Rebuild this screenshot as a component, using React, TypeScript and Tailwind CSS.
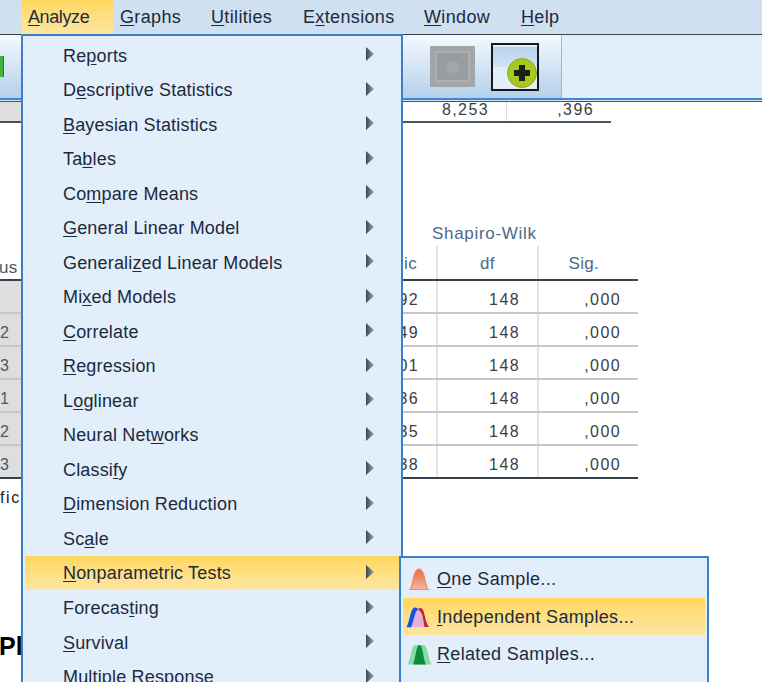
import React from 'react';

const font = "font-['Liberation_Sans',Arial,sans-serif]";

// text with the mnemonic letter underlined
const Label = ({ text, at }: { text: string; at: number }) => (
  <span>
    {text.slice(0, at)}
    <u className="underline-offset-2">{text[at]}</u>
    {text.slice(at + 1)}
  </span>
);

const topMenu: [string, number, string][] = [
  ['Graphs', 0, 'w-[91px]'],
  ['Utilities', 0, 'w-[92px]'],
  ['Extensions', 1, 'w-[121px]'],
  ['Window', 0, 'w-[97px]'],
  ['Help', 0, 'w-[60px]'],
];

const analyzeItems: [string, number][] = [
  ['Reports', 2],
  ['Descriptive Statistics', 1],
  ['Bayesian Statistics', 0],
  ['Tables', 2],
  ['Compare Means', 2],
  ['General Linear Model', 0],
  ['Generalized Linear Models', 8],
  ['Mixed Models', 2],
  ['Correlate', 0],
  ['Regression', 0],
  ['Loglinear', 1],
  ['Neural Networks', 10],
  ['Classify', 6],
  ['Dimension Reduction', 0],
  ['Scale', 2],
  ['Nonparametric Tests', 0],
  ['Forecasting', 7],
  ['Survival', 0],
  ['Multiple Response', 0],
];

const rows = [
  ['', '92'],
  ['2', '49'],
  ['3', '01'],
  ['1', '36'],
  ['2', '35'],
  ['3', '38'],
];

const OneSampleIcon = () => (
  <svg width="20" height="23" viewBox="0 0 20 23">
    <defs>
      <linearGradient id="one" x1="0" y1="0" x2="0" y2="1">
        <stop offset="0" stopColor="#e56a42" />
        <stop offset="1" stopColor="#f4b79f" />
      </linearGradient>
    </defs>
    <path d="M1 21.5 C4 19 4 1 10 1 C16 1 16 19 19 21.5 Z" fill="url(#one)" stroke="#ec8b68" strokeWidth="1.2" />
  </svg>
);

const IndependentIcon = () => (
  <svg width="24" height="23" viewBox="0 0 24 23">
    <path d="M5 21 C8 14 8 3 12 3 C16 3 16 14 20 21 Z" fill="#e4aee0" />
    <path d="M14 2 C19 1 18 14 23 21 L18.5 21 C17 13 17 6 12 3.5 Z" fill="#c0232f" />
    <path d="M0.5 21 C4 16 4 2 9 1.5 C10.5 1.5 11.5 2 12.5 3 C8.5 5 8 15 5 21.5 Z" fill="#1252e6" />
  </svg>
);

const RelatedIcon = () => (
  <svg width="25" height="21" viewBox="0 0 25 21">
    <path d="M0.5 20.5 C4 15 4 2 8 1 L17 1 C21 2 21 15 24.5 20.5 Z" fill="#86dca4" />
    <path d="M6 20.5 C9 14 9 1 12.5 1 C16 1 16 14 19 20.5 Z" fill="#0d8a3e" />
  </svg>
);

const Arrow = () => (
  <svg width="8" height="14" viewBox="0 0 8 14" className="absolute left-[341px] top-1/2 -mt-[8px]">
    <defs>
      <linearGradient id="arrow" x1="0" y1="0" x2="1" y2="0">
        <stop offset="0" stopColor="#3e4650" />
        <stop offset="1" stopColor="#9aa4ae" />
      </linearGradient>
    </defs>
    <path d="M0 0 L8 7 L0 14 Z" fill="url(#arrow)" />
  </svg>
);

const App: React.FC = () => {
  return (
    <div className={`relative w-[762px] h-[682px] overflow-hidden bg-white text-[18px] text-[#1c2a3c] ${font}`}>
      {/* menu bar */}
      <div className="flex h-[34px] bg-[#cfe0f1] pl-[21px] items-stretch">
        <div className="flex w-[92px] items-center pl-[7px] tracking-[-0.4px] bg-gradient-to-b from-[#ffd75e] to-[#fde6a0]">
          <Label text="Analyze" at={0} />
        </div>
        {topMenu.map(([t, at, w]) => (
          <div key={t} className={`flex items-center pl-[7px] tracking-[0.35px] ${w}`}>
            <Label text={t} at={at} />
          </div>
        ))}
      </div>

      {/* toolbar */}
      <div className="flex h-[64px] border-t border-[#3c4450]">
        <div className="w-[562px] flex items-center gap-[16px] pr-[22px] border-r border-[#a8b4c0] bg-gradient-to-b from-[#f4f9fe] to-[#b4d0ea]">
          <div className="w-[4px] h-[21px] mr-auto bg-[#3fb13c] border-r border-[#2c7a2a]" />
          <div className="w-[45px] h-[41px] bg-[#a3a6a8] p-[5px]">
            <div className="w-full h-full bg-[#9a9da0] border-2 border-[#adafb1] flex items-center justify-center">
              <div className="w-[14px] h-[12px] rounded-full bg-[#a3a6a8]" />
            </div>
          </div>
          <div className="relative w-[48px] h-[48px] border-2 border-[#16181c] bg-[#e3eefb]">
            <div className="h-[20px] mt-[2px] bg-gradient-to-b from-[#b8d2ec] to-[#d3e3f5]" />
            <svg width="30" height="30" viewBox="0 0 30 30" className="absolute left-[14px] top-[13px]">
              <circle cx="15" cy="15" r="14.5" fill="#a8c820" stroke="#8aa818" />
              <path d="M12 7 H18 V12 H23 V18 H18 V23 H12 V18 H7 V12 H12 Z" fill="#1c2016" />
            </svg>
          </div>
        </div>
        <div className="flex-1 bg-[#e3eefb]" />
      </div>
      <div className="h-[4px] border-t-2 border-b border-t-[#3c88d8] border-b-[#3c48b8] bg-[#d8e6f6]" />

      {/* output viewer */}
      <div className="text-[#3a3f46] text-[16px] tracking-[1.4px]">
        <div className="flex h-[21px] w-[611px] border-b-2 border-[#4a545c] leading-[16px]">
          <div className="w-[21px] h-full bg-[#dedede]" />
          <div className="w-[468px] text-right">8,253</div>
          <div className="ml-[17px] border-l border-[#dcdcdc] h-full w-[105px] pr-[17px] text-right">,396</div>
        </div>

        <div className="mt-[98px] ml-[432px] h-[25px] text-[#4a6a88] text-[17px] tracking-[0.7px]">Shapiro-Wilk</div>
        <div className="flex h-[35px] w-[638px] border-b-2 border-[#34424e] text-[#4a6a88] text-[17px] items-center tracking-[0.3px]">
          <div className="w-[20px] -ml-[1px] pt-[11px] text-[#4a5a68]">us</div>
          <div className="w-[398px] pt-[2px] text-right">ic</div>
          <div className="w-[101px] pt-[2px] border-l-2 border-[#e4e4e4] h-full flex items-center justify-center ml-[19px]">df</div>
          <div className="w-[101px] pt-[2px] border-l-2 border-[#e4e4e4] h-full flex items-center justify-end pr-[39px]">Sig.</div>
        </div>
        {rows.map(([a, b], i) => (
          <div
            key={i}
            className={`flex h-[33px] w-[638px] items-center border-b-2 ${i === 5 ? 'border-[#34424e]' : 'border-[#c8c8c8]'}`}
          >
            <div className="w-[21px] h-full flex items-center pt-[6px] bg-[#dedede] text-[#4a5a68]">{a}</div>
            <div className="w-[398px] pt-[6px] text-right">{b}</div>
            <div className="w-[101px] ml-[17px] pt-[6px] border-l-2 border-[#e4e4e4] h-full flex items-center justify-end pr-[17px]">148</div>
            <div className="w-[101px] pt-[6px] border-l-2 border-[#e4e4e4] h-full flex items-center justify-end pr-[17px]">,000</div>
          </div>
        ))}
        <div className="mt-[7px] text-[#1c1c1c] h-[20px] tracking-[1.6px]">fica</div>
        <div className="mt-[122px] -ml-[1px] text-[25px] tracking-normal font-bold text-black">Plo</div>
      </div>

      {/* Analyze menu */}
      <div className="absolute left-[21px] top-[34px] w-[382px] h-[660px] bg-[#e3eefb] border-2 border-[#3a7fcb] pt-[2px] pl-[2px] pr-[1px] tracking-[0.17px]">
        {analyzeItems.map(([t, at]) => (
          <div
            key={t}
            className={`relative h-[34.53px] flex items-center pl-[38px] pt-[2px] ${
              t === 'Nonparametric Tests' ? 'bg-gradient-to-b from-[#ffd75e] to-[#fde6a0]' : ''
            }`}
          >
            <Label text={t} at={at} />
            <Arrow />
          </div>
        ))}
      </div>

      {/* Nonparametric Tests submenu */}
      <div className="absolute left-[399px] top-[556px] w-[310px] h-[140px] bg-[#e3eefb] border-2 border-[#3a7fcb] p-[2px] tracking-[0.33px]">
        <div className="flex items-center h-[37.5px] pl-[6px] pt-[2px]">
          <div className="w-[28px]"><OneSampleIcon /></div>
          <Label text="One Sample..." at={0} />
        </div>
        <div className="flex items-center h-[37.5px] pl-[3px] pt-[2px] bg-gradient-to-b from-[#ffd75e] to-[#fde6a0]">
          <div className="w-[31px]"><IndependentIcon /></div>
          <Label text="Independent Samples..." at={0} />
        </div>
        <div className="flex items-center h-[37.5px] pl-[4px] pt-[2px]">
          <div className="w-[30px]"><RelatedIcon /></div>
          <Label text="Related Samples..." at={0} />
        </div>
      </div>
    </div>
  );
};

export default App;
